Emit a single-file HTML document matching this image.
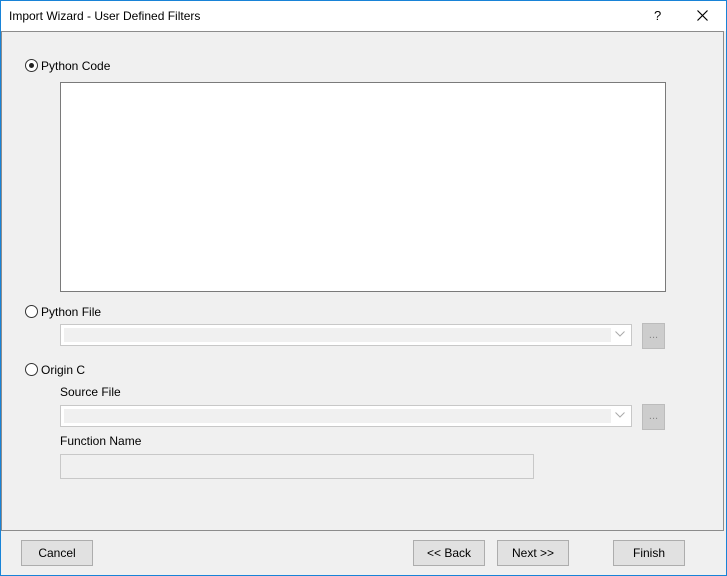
<!DOCTYPE html>
<html><head><style>
body{margin:0;width:727px;height:576px;background:#f0f0f0;font-family:"Liberation Sans",sans-serif;font-size:12px;color:#000;position:relative;overflow:hidden}
.a{position:absolute}
.win{left:0;top:0;width:725px;height:574px;border:1px solid #1883d7}
.title{left:1px;top:1px;width:725px;height:30px;background:#fff}
.panel{left:1px;top:31px;width:721px;height:498px;border:1px solid #8c8c8c;background:#f0f0f0}
.radio{width:11px;height:11px;border:1px solid #333;border-radius:50%;background:#fff}
.dot{left:3px;top:3px;width:5px;height:5px;border-radius:50%;background:#222}
.combo{height:20px;border:1px solid #c8c8c8;background:#fff}
.combo i{position:absolute;left:3px;top:3px;right:20px;bottom:3px;background:#f0f0f0}
.dd{width:21px;height:24px;border:1px solid #bcbcbc;background:#cdcdcd;color:#888;text-align:center;line-height:22px;font-size:11px}
.btn{width:70px;height:24px;border:1px solid #adadad;background:#e1e1e1;text-align:center;line-height:24px}
</style></head><body>
<div class="a win"></div>
<div class="a title"></div>
<div class="a" style="left:9px;top:9px">Import Wizard - User Defined Filters</div>
<div class="a" style="left:654px;top:8px;font-size:13px">?</div>
<svg class="a" style="left:697px;top:10px" width="11" height="11"><path d="M0.5 0.5L10.5 10.5M10.5 0.5L0.5 10.5" stroke="#000" stroke-width="1.2"/></svg>
<div class="a panel"></div>
<div class="a radio" style="left:25px;top:59px"><div class="a dot"></div></div>
<div class="a" style="left:41px;top:59px">Python Code</div>
<div class="a" style="left:60px;top:82px;width:604px;height:208px;border:1px solid #7a7a7a;background:#fff"></div>
<div class="a radio" style="left:25px;top:305px"></div>
<div class="a" style="left:41px;top:305px">Python File</div>
<div class="a combo" style="left:60px;top:324px;width:570px"><i></i></div>
<svg class="a" style="left:615px;top:331px" width="10" height="6"><path d="M0.5 0.5L5 5L9.5 0.5" stroke="#aaa" fill="none"/></svg>
<div class="a dd" style="left:642px;top:323px">...</div>
<div class="a radio" style="left:25px;top:363px"></div>
<div class="a" style="left:41px;top:363px">Origin C</div>
<div class="a" style="left:60px;top:385px">Source File</div>
<div class="a combo" style="left:60px;top:405px;width:570px"><i></i></div>
<svg class="a" style="left:615px;top:412px" width="10" height="6"><path d="M0.5 0.5L5 5L9.5 0.5" stroke="#aaa" fill="none"/></svg>
<div class="a dd" style="left:642px;top:404px">...</div>
<div class="a" style="left:60px;top:434px">Function Name</div>
<div class="a" style="left:60px;top:454px;width:472px;height:23px;border:1px solid #c8c8c8;background:#f0f0f0"></div>
<div class="a btn" style="left:21px;top:540px">Cancel</div>
<div class="a btn" style="left:413px;top:540px">&lt;&lt; Back</div>
<div class="a btn" style="left:497px;top:540px">Next &gt;&gt;</div>
<div class="a btn" style="left:613px;top:540px">Finish</div>
</body></html>
